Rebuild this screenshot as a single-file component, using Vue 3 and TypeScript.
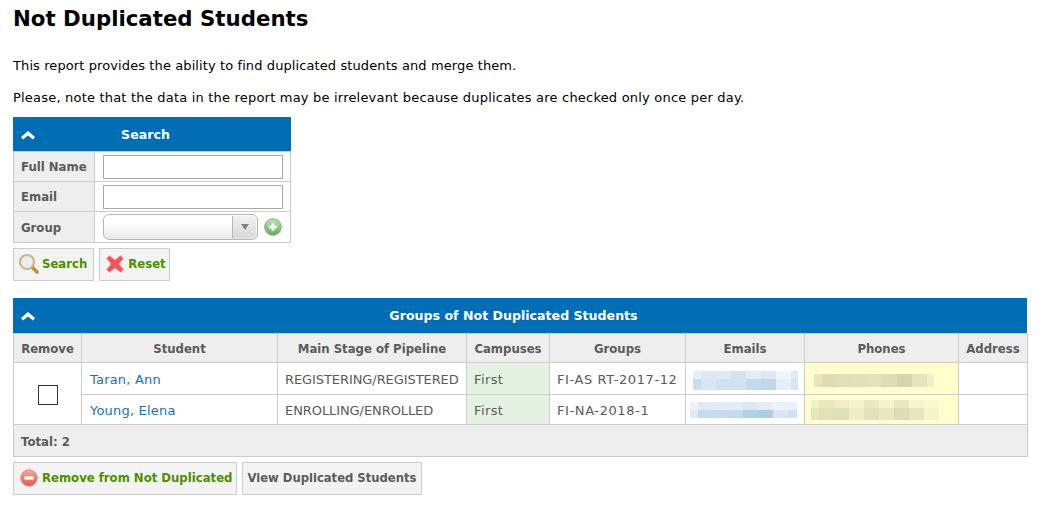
<template>
  <div class="page">
    <h1 class="title">Not Duplicated Students</h1>
    <p class="intro introShort">This report provides the ability to find duplicated students and merge them.</p>
    <p class="intro">Please, note that the data in the report may be irrelevant because duplicates are checked only once per day.</p>

    <section class="searchBox">
      <div class="panelHead searchHead">
        <svg class="chevron" width="14" height="9" viewBox="0 0 14 9"><path d="M7 0 L14 6 L12 8.5 L7 4.5 L2 8.5 L0 6 Z" fill="#fff" /></svg>
        <span>Search</span>
      </div>
      <table class="formTable">
        <tbody>
          <tr class="rowInput">
            <th>Full Name</th>
            <td><input class="textInput" type="text"></td>
          </tr>
          <tr class="rowInput">
            <th>Email</th>
            <td><input class="textInput" type="text"></td>
          </tr>
          <tr class="rowGroup">
            <th>Group</th>
            <td>
              <div class="groupCell">
                <div class="combo">
                  <div class="comboArrow"><i /></div>
                </div>
                <svg width="18" height="18" viewBox="0 0 18 18">
                  <defs>
                    <linearGradient id="plusBg" x1="0" y1="0" x2="0" y2="1">
                      <stop offset="0" stop-color="#bfe3b8" />
                      <stop offset="1" stop-color="#62ad57" />
                    </linearGradient>
                  </defs>
                  <circle cx="9" cy="9" r="8.4" fill="url(#plusBg)" stroke="#74ad6b" stroke-width="0.9" />
                  <path d="M7.6 5h2.8v2.6H13v2.8h-2.6V13H7.6v-2.6H5V7.6h2.6z" fill="#f4fbf2" />
                </svg>
              </div>
            </td>
          </tr>
        </tbody>
      </table>
      <div class="buttons">
        <button class="btn btnSearch" type="button">
          <svg width="22" height="22" viewBox="0 0 22 22">
            <path d="M14 14 L19 19" stroke="#c08a4a" stroke-width="3.6" stroke-linecap="round" />
            <circle cx="9" cy="9" r="7" fill="#e8eff4" stroke="#d6b385" stroke-width="2.2" />
          </svg>
          Search
        </button>
        <button class="btn btnReset" type="button">
          <svg width="22" height="22" viewBox="-2 -2 22 22">
            <path d="M3.5 0.5 L9 5 L14.5 0.5 L17.5 3.5 L13 9 L17.5 14.5 L14.5 17.5 L9 13 L3.5 17.5 L0.5 14.5 L5 9 L0.5 3.5 Z" fill="#f2545c" stroke="#f9a9ac" stroke-width="0.8" stroke-linejoin="round" />
          </svg>
          Reset
        </button>
      </div>
    </section>

    <section class="results">
      <div class="panelHead resultsHead">
        <svg class="chevron" width="14" height="9" viewBox="0 0 14 9"><path d="M7 0 L14 6 L12 8.5 L7 4.5 L2 8.5 L0 6 Z" fill="#fff" /></svg>
        <span>Groups of Not Duplicated Students</span>
      </div>
      <table class="grid">
        <colgroup>
          <col v-for="w in colWidths" :key="w.name" :style="{ width: w.px + 'px' }">
        </colgroup>
        <thead>
          <tr>
            <th v-for="w in colWidths" :key="w.name">{{ w.name }}</th>
          </tr>
        </thead>
        <tbody>
          <tr v-for="(s, i) in students" :key="s.name" :class="i === 0 ? 'rowFirst' : 'rowSecond'">
            <td v-if="i === 0" rowspan="2" class="checkCell"><span class="check" /></td>
            <td class="nameCell"><a class="link" href="#">{{ s.name }}</a></td>
            <td class="stage">{{ s.stage }}</td>
            <td class="campus">{{ s.campus }}</td>
            <td class="groupName">{{ s.group }}</td>
            <td class="blurCell">
              <div class="mosaic" :style="mosaicPos(s.email)">
                <div v-for="(row, r) in s.email.rows" :key="r" class="mosaicRow" :style="{ height: row.h + 'px' }">
                  <i v-for="(c, k) in row.colors" :key="k" :style="{ background: c, width: s.email.widths[k] + 'px' }" />
                </div>
              </div>
            </td>
            <td class="blurCell phone">
              <div class="mosaic" :style="mosaicPos(s.phone)">
                <div v-for="(row, r) in s.phone.rows" :key="r" class="mosaicRow" :style="{ height: row.h + 'px' }">
                  <i v-for="(c, k) in row.colors" :key="k" :style="{ background: c, width: s.phone.widths[k] + 'px' }" />
                </div>
              </div>
            </td>
            <td />
          </tr>
        </tbody>
        <tfoot>
          <tr>
            <td colspan="8">Total: 2</td>
          </tr>
        </tfoot>
      </table>
      <div class="buttons">
        <button class="btn" type="button">
          <svg width="22" height="22" viewBox="-2 -2 22 22">
            <defs>
              <linearGradient id="minusBg" x1="0" y1="0" x2="0" y2="1">
                <stop offset="0" stop-color="#f4a89c" />
                <stop offset="1" stop-color="#dc5a4c" />
              </linearGradient>
            </defs>
            <circle cx="9" cy="9" r="8.3" fill="url(#minusBg)" stroke="#d98a80" stroke-width="0.8" />
            <rect x="4.5" y="7.4" width="9" height="3.2" fill="#fff" />
          </svg>
          Remove from Not Duplicated
        </button>
        <button class="btn btnGrey" type="button">View Duplicated Students</button>
      </div>
    </section>
  </div>
</template>

<script setup lang="ts">
interface Mosaic {
  left: number
  top: number
  widths: number[]
  rows: { h: number; colors: string[] }[]
}

const colWidths = [
  { name: 'Remove', px: 68 },
  { name: 'Student', px: 196 },
  { name: 'Main Stage of Pipeline', px: 189 },
  { name: 'Campuses', px: 83 },
  { name: 'Groups', px: 136 },
  { name: 'Emails', px: 119 },
  { name: 'Phones', px: 154 },
  { name: 'Address', px: 69 },
]

// pixelated blocks standing in for the blurred contact data
const students: { name: string; stage: string; campus: string; group: string; email: Mosaic; phone: Mosaic }[] = [
  {
    name: 'Taran, Ann',
    stage: 'REGISTERING/REGISTERED',
    campus: 'First',
    group: 'FI-AS RT-2017-12',
    email: {
      left: 7,
      top: 8,
      widths: [8, 15, 15, 15, 15, 15, 15, 7],
      rows: [
        { h: 8, colors: ['#e4eff6', '#dce8f3', '#dfeaf4', '#d2e3f0', '#e4edf6', '#dce8f3', '#f0f5fa', '#dcebf5'] },
        { h: 11, colors: ['#c9dff0', '#d8e6f2', '#d0e2f1', '#d2e2f0', '#c5daee', '#bfd7ea', '#e6eef6', '#d5e6f3'] },
      ],
    },
    phone: {
      left: 9,
      top: 11,
      widths: [8, 15, 15, 15, 15, 15, 15, 15, 7],
      rows: [
        { h: 13, colors: ['#e8e4bb', '#e0dcb4', '#dfe0bb', '#e3dfba', '#e3e2bc', '#deddb7', '#d6d5b0', '#e5e4bd', '#f1f1c9'] },
      ],
    },
  },
  {
    name: 'Young, Elena',
    stage: 'ENROLLING/ENROLLED',
    campus: 'First',
    group: 'FI-NA-2018-1',
    email: {
      left: 4,
      top: 7,
      widths: [8, 15, 15, 15, 15, 15, 15, 9],
      rows: [
        { h: 8, colors: ['#eef3f9', '#dfeaf4', '#e2ecf6', '#e4edf6', '#dbe8f3', '#e5eef7', '#edf2f9', '#e8f1f8'] },
        { h: 8, colors: ['#dfeaf4', '#c5dbee', '#c8dcee', '#c3d9ec', '#b2d0e8', '#afcde7', '#d9e5f2', '#cee2f1'] },
      ],
    },
    phone: {
      left: 6,
      top: 5,
      widths: [8, 15, 15, 15, 15, 15, 15, 15, 15],
      rows: [
        { h: 8, colors: ['#f2f2c8', '#eaeabb', '#f0eec2', '#f6f4cb', '#e8eabf', '#f5f5c9', '#e6e9be', '#f6f5cb', '#fafad2'] },
        { h: 12, colors: ['#e6e7bd', '#e3e0ba', '#dfe1bc', '#efedc3', '#dfe2be', '#e9e8c1', '#dcdcb8', '#e9e6bf', '#f5f5cd'] },
      ],
    },
  },
]

const mosaicPos = (m: Mosaic) => ({ margin: `${m.top}px 0 0 ${m.left}px` })
</script>

<style>
body {
  background: #fff;
}
</style>

<style scoped>
.page {
  padding: 0 35px 0 13px;
  font-family: "DejaVu Sans", Verdana, sans-serif;
  font-size: 13px;
  color: #5a5a5a;
}

.title {
  margin: 0;
  padding-top: 6px;
  font-size: 21.3px;
  line-height: 26px;
  font-weight: bold;
  color: #000;
}

.intro {
  margin: 0;
  padding-top: 17px;
  font-size: 13px;
  letter-spacing: 0.2px;
  line-height: 15px;
  color: #000;
}

.title + .intro {
  padding-top: 26px;
}

.introShort {
  letter-spacing: 0.1px;
}

.searchBox {
  width: 278px;
  margin-top: 12px;
}

.panelHead {
  display: flex;
  align-items: center;
  justify-content: center;
  position: relative;
  box-sizing: border-box;
  padding-right: 13px;
  background: #016db5;
  color: #fff;
  font-weight: bold;
  font-size: 12.6px;
}

.searchHead {
  height: 34px;
}

.resultsHead {
  height: 35px;
}

.chevron {
  position: absolute;
  left: 8px;
  top: 14px;
}

.formTable {
  width: 100%;
  border-collapse: collapse;
  table-layout: fixed;
}

.formTable th {
  width: 81px;
  padding: 0 0 0 7px;
  text-align: left;
  background: #eee;
  border: 1px solid #ccc;
  font-size: 11.7px;
  white-space: nowrap;
  box-sizing: border-box;
}

.formTable td {
  padding: 0 8px;
  border: 1px solid #ccc;
}

.rowInput {
  height: 30px;
}

.rowGroup {
  height: 31px;
}

.rowGroup th {
  padding-top: 2px;
}

.textInput {
  display: block;
  box-sizing: border-box;
  width: 180px;
  height: 24px;
  margin: 0;
  padding: 0 4px;
  border: 1px solid #aaa;
  background: #fff;
}

.groupCell {
  display: flex;
  align-items: center;
  gap: 6px;
}

.combo {
  box-sizing: border-box;
  width: 156px;
  height: 26px;
  border: 1px solid #b5b5b5;
  border-radius: 6px;
  background: linear-gradient(#fff 40%, #e8e8e8);
  display: flex;
  justify-content: flex-end;
}

.comboArrow {
  width: 23px;
  margin: 1px 1px 1px 0;
  border-left: 1px solid #b5b5b5;
  background: linear-gradient(#f2f2f2, #d8d8d8);
  border-radius: 0 5px 5px 0;
  display: flex;
  align-items: center;
  justify-content: center;
}

.comboArrow i {
  width: 0;
  height: 0;
  border-left: 4px solid transparent;
  border-right: 4px solid transparent;
  border-top: 6px solid #808080;
}

.buttons {
  display: flex;
  gap: 5px;
  margin-top: 5px;
}

.btn {
  display: flex;
  align-items: center;
  gap: 2px;
  box-sizing: border-box;
  height: 33px;
  margin: 0;
  padding: 0 4px 2px;
  border: 1px solid #ccc;
  background: #f3f3f3;
  color: #4d8f00;
  font-family: inherit;
  font-size: 11.7px;
  font-weight: bold;
}

.btnSearch {
  padding-right: 6px;
}

.btnReset {
  padding-right: 3px;
}

.btnGrey {
  color: #5a5a5a;
  font-size: 11.6px;
  padding-right: 5px;
}

.results {
  margin-top: 17px;
  width: 1014px;
}

.grid {
  width: 1014px;
  border-collapse: collapse;
  table-layout: fixed;
}

.grid th {
  height: 26px;
  padding: 2px 0 0;
  background: #eee;
  border: 1px solid #ccc;
  font-size: 11.7px;
}

.grid td {
  padding: 2px 7px 0;
  border: 1px solid #ccc;
  font-size: 13px;
  white-space: nowrap;
}

.rowFirst {
  height: 32px;
}

.rowSecond {
  height: 30px;
}

.checkCell {
  text-align: center;
}

.check {
  display: inline-block;
  vertical-align: middle;
  width: 20px;
  height: 20px;
  border: 1px solid #333;
  box-sizing: border-box;
}

.grid td.nameCell {
  padding-left: 8px;
  letter-spacing: 0.2px;
}

.link {
  color: #1a6fb5;
  text-decoration: none;
}

.grid td.stage {
  letter-spacing: -0.08px;
}

.grid td.campus {
  background: #e3f2e1;
  letter-spacing: 0.4px;
}

.grid td.groupName {
  letter-spacing: 0.6px;
}

.grid td.blurCell {
  padding: 0;
  vertical-align: top;
}

.grid td.phone {
  background: #ffffcc;
}

.mosaicRow {
  display: flex;
}

.mosaicRow i {
  display: block;
  flex: none;
}

.grid tfoot td {
  height: 29px;
  padding-left: 7px;
  background: #eee;
  font-size: 11.7px;
  font-weight: bold;
}
</style>
